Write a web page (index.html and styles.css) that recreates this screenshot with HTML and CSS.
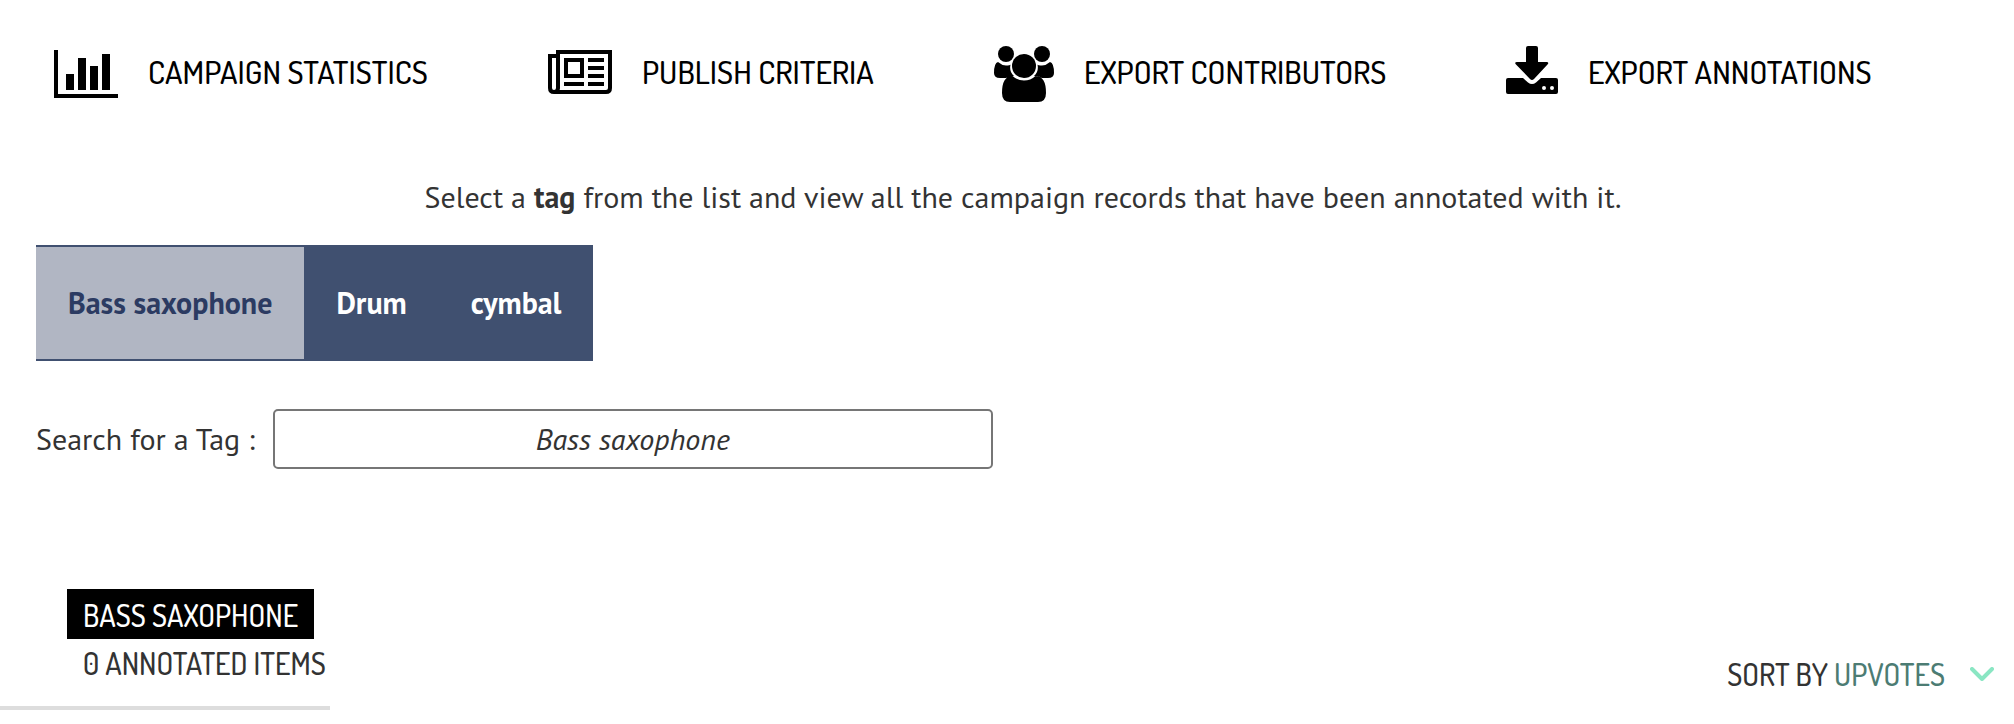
FILE: index.html
```html
<!DOCTYPE html>
<html lang="en">
<head>
<meta charset="utf-8">
<title>Campaign records</title>
<link rel="stylesheet" href="styles.css">
</head>
<body>
<nav class="actions">
  <a class="action" href="#statistics">
    <svg class="icon" width="64" height="56" viewBox="0 -4 64 56" aria-hidden="true"><path d="M0 0h4v44h60v4H0zM12 24h8v16h-8zM24 8h8v32h-8zM36 16h8v24h-8zM48 4h8v36h-8z"/></svg>
    <span>CAMPAIGN STATISTICS</span>
  </a>
  <a class="action" href="#criteria">
    <svg class="icon" width="64" height="56" viewBox="0 -4 64 56" aria-hidden="true"><path fill-rule="evenodd" d="M8 0h56v38q0 6-6 6H6q-6 0-6-6V4h8zM12 4v34q0 1-.4 2H58q2 0 2-2V4zM4 8v30q0 2 2 2t2-2V8zM16 8h20v20H16zM20 12v12h12V12zM40 8h16v4H40zM40 16h16v4H40zM40 24h16v4H40zM40 32h16v4H40zM16 32h20v4H16z"/></svg>
    <span>PUBLISH CRITERIA</span>
  </a>
  <a class="action" href="#contributors">
    <svg class="icon" width="60" height="56" viewBox="0 0 60 56" aria-hidden="true"><circle cx="12" cy="8" r="8"/><circle cx="48" cy="8" r="8"/><circle cx="30" cy="20" r="12"/><path d="M4 16q4 3.500 8 3.500t4.500-1Q15 26 20 30q-5 0-8 2H6q-6 0-6-5 0-10 4-11zM56 16q-4 3.500-8 3.500t-4.500-1Q45 26 40 30q5 0 8 2h6q6 0 6-5 0-10-4-11zM18.500 30q5 4.500 11.500 4.500T41.500 30Q52 30 52 47q0 9-8 9H16q-8 0-8-9 0-17 10.500-17z"/></svg>
    <span>EXPORT CONTRIBUTORS</span>
  </a>
  <a class="action" href="#annotations">
    <svg class="icon" width="52" height="56" viewBox="0 0 52 56" aria-hidden="true"><path fill-rule="evenodd" d="M22 0h8q2 0 2 2v14h8.500q3 0 1 2.500L28 33q-2 2-4 0L10 18.500Q8 16 11 16h9V2q0-2 2-2zM2 32h15l5 4.500q4 3 8 0l5-4.500h15q2 0 2 2v12q0 2-2 2H2q-2 0-2-2V34q0-2 2-2zM38 40a2 2 0 1 0 0 4 2 2 0 0 0 0-4zM46 40a2 2 0 1 0 0 4 2 2 0 0 0 0-4z"/></svg>
    <span>EXPORT ANNOTATIONS</span>
  </a>
</nav>
<main class="content">
  <p class="intro">Select a <strong>tag</strong> from the list and view all the campaign records that have been annotated with it.</p>
  <div class="tags">
    <button class="tag tag-active" type="button">Bass saxophone</button>
    <button class="tag" type="button">Drum</button>
    <button class="tag" type="button">cymbal</button>
  </div>
  <div class="search">
    <label for="tag-search">Search for a Tag :</label>
    <input class="search-box" id="tag-search" type="text" placeholder="Bass saxophone">
  </div>
</main>
<section class="results">
  <div class="summary">
    <h2 class="selected">BASS SAXOPHONE</h2>
    <p class="count">0 ANNOTATED ITEMS</p>
  </div>
  <button class="sort" type="button">
    <span>SORT BY <span class="sort-value">UPVOTES</span></span>
    <svg width="24" height="14" viewBox="0 0 24 14" aria-hidden="true"><path class="chevron" d="M2 2l10 10L22 2"/></svg>
  </button>
</section>
</body>
</html>
```
FILE: styles.css
```css
* { box-sizing: border-box; }
body {
  margin: 0;
  background: #fff;
  color: #333;
  font: 30px/40px "PT Sans", "Open Sans", "Noto Sans", sans-serif;
}
button { border: 0; background: none; font: inherit; color: inherit; cursor: pointer; }
.actions, .results {
  font-family: Dosis, Roboto, sans-serif;
  font-weight: 500;
}
.actions {
  display: grid;
  grid-template-columns: 494fr 446fr 512fr 508fr;
  padding: 46px 0 0 54px;
  font-size: 32px;
  line-height: 52px;
}
.action {
  display: flex;
  align-items: flex-start;
  gap: 30px;
  color: #000;
  text-decoration: none;
  white-space: nowrap;
}
.icon { flex: none; }
.content { padding: 0 0 0 36px; }
.intro { margin: 75px 0 28px; text-align: center; padding-right: 4px; }
.tags {
  display: flex;
  width: fit-content;
  height: 116px;
  border: solid #405070;
  border-width: 2px 0;
  background: #405070;
}
.tag { padding: 0 32px; color: #fff; font-weight: bold; }
.tag-active { background: #b1b6c3; color: #2c3b62; }
.search { display: flex; align-items: center; gap: 18px; margin-top: 48px; }
.search-box {
  width: 36.4%;
  height: 60px;
  padding: 0 2px 2px;
  border: 2px solid #767676;
  border-radius: 5px;
  font: inherit;
  text-align: center;
}
.search-box::placeholder { color: #333; font-style: italic; opacity: 1; }
.results {
  display: flex;
  justify-content: space-between;
  align-items: flex-start;
  margin-top: 120px;
}
.summary {
  padding: 0 4px 23px 67px;
  border-bottom: 4px solid #ddd;
}
.selected {
  width: fit-content;
  margin: 0;
  padding: 6px 16px 4px;
  background: #000;
  color: #fff;
  font: inherit;
}
.count { margin: 4px 0 0; padding-left: 16px; }
.sort { display: flex; align-items: center; gap: 25px; margin-top: 65px; padding: 0 20px 0 0; }
.sort-value { color: #4c7c73; }
.chevron { fill: none; stroke: #8ae6c3; stroke-width: 4; stroke-linecap: round; stroke-linejoin: round; }
```
